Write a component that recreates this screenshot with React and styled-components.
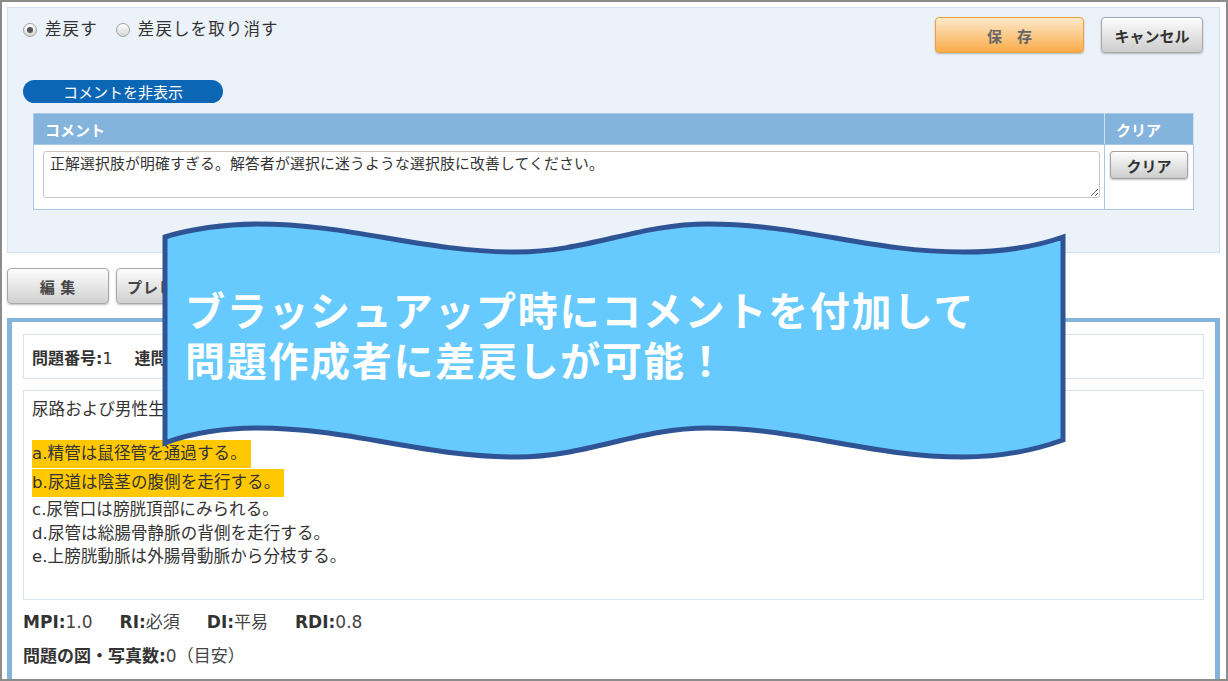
import React from 'react';
import styled, { createGlobalStyle, css } from 'styled-components';

const GlobalStyle = createGlobalStyle`
  html, body { margin: 0; padding: 0; background: #fff; }
  body { font-family: "Noto Sans CJK JP", "Noto Sans", sans-serif; color: #333; }
  * { box-sizing: border-box; }
`;

const FONT = `"Noto Sans CJK JP", "Noto Sans", sans-serif`;
const MIXED = `"DejaVu Sans", "Noto Sans CJK JP", sans-serif`;

const Frame = styled.div`
  position: relative;
  width: 1228px;
  height: 681px;
  border: 2px solid #8c8c8c;
  padding: 5px 6px 0 5px;
  overflow: hidden;
  background: #fff;
`;

const TopPanel = styled.section`
  height: 246px;
  background: #ebf2fa;
  border: 1px solid #d3e2f1;
  padding: 9px 16px 0 15px;
`;

const HeaderRow = styled.div`
  display: flex;
  justify-content: space-between;
  align-items: flex-start;
`;

const RadioGroup = styled.div`
  display: flex;
  gap: 18px;
  padding-top: 0;
`;

const RadioLabel = styled.label`
  display: flex;
  align-items: center;
  gap: 8px;
  font-size: 16.5px;
  letter-spacing: 1.1px;
  line-height: 22px;
  color: #333;
`;

const RadioDot = styled.span`
  position: relative;
  width: 14px;
  height: 14px;
  border-radius: 50%;
  border: 1px solid #a0a0a0;
  background: linear-gradient(#fdfdfd, #d6d6d6);
  margin-top: 3px;
  ${(p) =>
    p.$checked &&
    css`
      &::after {
        content: '';
        position: absolute;
        left: 3px;
        top: 3px;
        width: 6px;
        height: 6px;
        border-radius: 50%;
        background: #555;
      }
    `}
`;

const ButtonGroup = styled.div`
  display: flex;
  gap: 17px;
`;

const ActionButton = styled.button`
  width: ${(p) => p.$w}px;
  height: 36px;
  border-radius: 4px;
  font-family: ${FONT};
  font-weight: 700;
  font-size: 15px;
  padding: 0;
  box-shadow: 0 1px 2px rgba(0, 0, 0, 0.25);
  ${(p) =>
    p.$primary
      ? css`
          background: linear-gradient(#fee9cc, #f8ac48);
          border: 1px solid #e8a33c;
          color: #666;
        `
      : css`
          background: linear-gradient(#fdfdfd, #cdcdcd);
          border: 1px solid #a8a8a8;
          color: #333;
        `}
`;

const TogglePill = styled.button`
  display: block;
  margin-top: 27px;
  width: 200px;
  height: 23px;
  border-radius: 12px;
  border: none;
  background: #0b66b6;
  color: #fff;
  font-family: ${FONT};
  font-size: 15px;
  line-height: 23px;
  padding: 0;
`;

const CommentTable = styled.table`
  margin: 10px 0 0 10px;
  width: 1160px;
  border-collapse: collapse;
  table-layout: fixed;
  background: #fff;
`;

const HeadCell = styled.th`
  background: #84b3dc;
  color: #fff;
  font-size: 15px;
  font-weight: 700;
  text-align: left;
  height: 31px;
  padding: 0 0 0 11px;
  border: 1px solid #a8c8e8;
  border-right-color: #cfe0f1;
`;

const BodyCell = styled.td`
  vertical-align: top;
  height: 65px;
  padding: ${(p) => (p.$pad ? p.$pad : '6px 3px 9px 9px')};
  border: 1px solid #a8c8e8;
`;

const CommentInput = styled.textarea`
  display: block;
  width: 1057px;
  height: 47px;
  border: 1px solid #c8c8c8;
  border-radius: 3px;
  padding: 1px 6px;
  font-family: ${FONT};
  font-size: 14.8px;
  letter-spacing: 0.2px;
  line-height: 20px;
  color: #333;
  background: #fff;
`;

const SmallButton = styled.button`
  width: 78px;
  height: 28px;
  border-radius: 3px;
  border: 1px solid #a0a0a0;
  background: linear-gradient(#fdfdfd, #cdcdcd);
  box-shadow: 0 1px 2px rgba(0, 0, 0, 0.25);
  font-family: ${FONT};
  font-weight: 700;
  font-size: 15px;
  color: #333;
  padding: 0;
`;

const ToolBar = styled.div`
  display: flex;
  gap: 7px;
  margin-top: 15px;
`;

const ToolButton = styled.button`
  width: 102px;
  height: 36px;
  border-radius: 4px;
  border: 1px solid #a8a8a8;
  background: linear-gradient(#fdfdfd, #d0d0d0);
  box-shadow: 0 1px 2px rgba(0, 0, 0, 0.25);
  font-family: ${FONT};
  font-weight: 700;
  font-size: 15px;
  letter-spacing: 1px;
  color: #444;
  padding: 0;
`;

const MainPanel = styled.section`
  margin-top: 14px;
  border: solid #84b3dc;
  border-width: 4px 5px 0 5px;
  padding: 12px 11px 0 11px;
  min-height: 420px;
  background: #fff;
  font-family: ${MIXED};
`;

const InfoBox = styled.div`
  height: 45px;
  border: 1px solid #d7e5f3;
  display: flex;
  align-items: center;
  gap: 22px;
  padding-left: 8px;
  font-size: 16px;
`;

const QuestionBox = styled.div`
  margin-top: 11px;
  height: 210px;
  border: 1px solid #d7e5f3;
  padding: 7px 8px 0 8px;
  font-size: 16.5px;
  letter-spacing: 0.1px;
  line-height: 24px;
`;

const Para = styled.p`
  margin: 0;
`;

const OptionList = styled.div`
  margin-top: 18px;
`;

const Option = styled.div`
  line-height: 23.5px;
  ${(p) =>
    p.$hl &&
    css`
      display: table;
      background: #ffc800;
      line-height: 24px;
      padding: 2px 4px 2px 0;
      margin-bottom: 1px;
    `}
`;

const StatRow = styled.div`
  display: flex;
  gap: 27px;
  margin-top: 10px;
  font-size: 17px;
  line-height: 24px;
`;

const Stat = styled.span`
  color: #444;
`;

const Label = styled.b`
  font-weight: 700;
  color: #333;
`;

const Banner = styled.div`
  position: absolute;
  left: 158px;
  top: 213px;
  width: 910px;
  height: 250px;
  pointer-events: none;
`;

const BannerShape = styled.svg`
  position: absolute;
  left: 0;
  top: 0;
  display: block;
`;

const BannerText = styled.p`
  position: absolute;
  left: 25px;
  top: 69px;
  margin: 0;
  white-space: nowrap;
  color: #fff;
  font-family: ${FONT};
  font-weight: 700;
  font-size: 40px;
  line-height: 50px;
  letter-spacing: 1.7px;
`;

const bannerPath = `
M165,237
C190,229 225,224 257,224
C352,224 422,252 517,252
C587,252 638,224 708,224
C801,224 870,252 963,252
C1000,252 1035,247 1063,237
L1063,440
C1035,450 1000,457 963,457
C870,457 801,428 708,428
C638,428 587,457 517,457
C422,457 352,428 257,428
C225,428 190,433 165,443
Z`;

export default function App() {
  return (
    <>
      <GlobalStyle />
      <Frame>
        <TopPanel>
          <HeaderRow>
            <RadioGroup>
              <RadioLabel>
                <RadioDot $checked />
                差戻す
              </RadioLabel>
              <RadioLabel>
                <RadioDot />
                差戻しを取り消す
              </RadioLabel>
            </RadioGroup>
            <ButtonGroup>
              <ActionButton $primary $w={149}>保　存</ActionButton>
              <ActionButton $w={102}>キャンセル</ActionButton>
            </ButtonGroup>
          </HeaderRow>
          <TogglePill>コメントを非表示</TogglePill>
          <CommentTable>
            <colgroup>
              <col style={{ width: 1071 }} />
              <col style={{ width: 89 }} />
            </colgroup>
            <thead>
              <tr>
                <HeadCell>コメント</HeadCell>
                <HeadCell>クリア</HeadCell>
              </tr>
            </thead>
            <tbody>
              <tr>
                <BodyCell>
                  <CommentInput
                    readOnly
                    defaultValue="正解選択肢が明確すぎる。解答者が選択に迷うような選択肢に改善してください。"
                  />
                </BodyCell>
                <BodyCell $pad="6px 0 0 5px">
                  <SmallButton>クリア</SmallButton>
                </BodyCell>
              </tr>
            </tbody>
          </CommentTable>
        </TopPanel>

        <ToolBar>
          <ToolButton>編 集</ToolButton>
          <ToolButton>プレビュー</ToolButton>
        </ToolBar>

        <MainPanel>
          <InfoBox>
            <span>
              <Label>問題番号:</Label>1
            </span>
            <span>
              <Label>連問:</Label>なし
            </span>
          </InfoBox>
          <QuestionBox>
            <Para>尿路および男性生殖器について正しいのはどれか。2つ選べ。</Para>
            <OptionList>
              <Option $hl>a.精管は鼠径管を通過する。</Option>
              <Option $hl>b.尿道は陰茎の腹側を走行する。</Option>
              <Option>c.尿管口は膀胱頂部にみられる。</Option>
              <Option>d.尿管は総腸骨静脈の背側を走行する。</Option>
              <Option>e.上膀胱動脈は外腸骨動脈から分枝する。</Option>
            </OptionList>
          </QuestionBox>
          <StatRow>
            <Stat><Label>MPI:</Label>1.0</Stat>
            <Stat><Label>RI:</Label>必須</Stat>
            <Stat><Label>DI:</Label>平易</Stat>
            <Stat><Label>RDI:</Label>0.8</Stat>
          </StatRow>
          <StatRow>
            <Stat><Label>問題の図・写真数:</Label>0（目安）</Stat>
          </StatRow>
        </MainPanel>

        <Banner>
          <BannerShape width="910" height="250" viewBox="160 215 910 250">
            <path d={bannerPath} fill="#66caff" stroke="#2f5496" strokeWidth="5" strokeLinejoin="miter" />
          </BannerShape>
          <BannerText>
            ブラッシュアップ時にコメントを付加して
            <br />
            問題作成者に差戻しが可能！
          </BannerText>
        </Banner>
      </Frame>
    </>
  );
}
